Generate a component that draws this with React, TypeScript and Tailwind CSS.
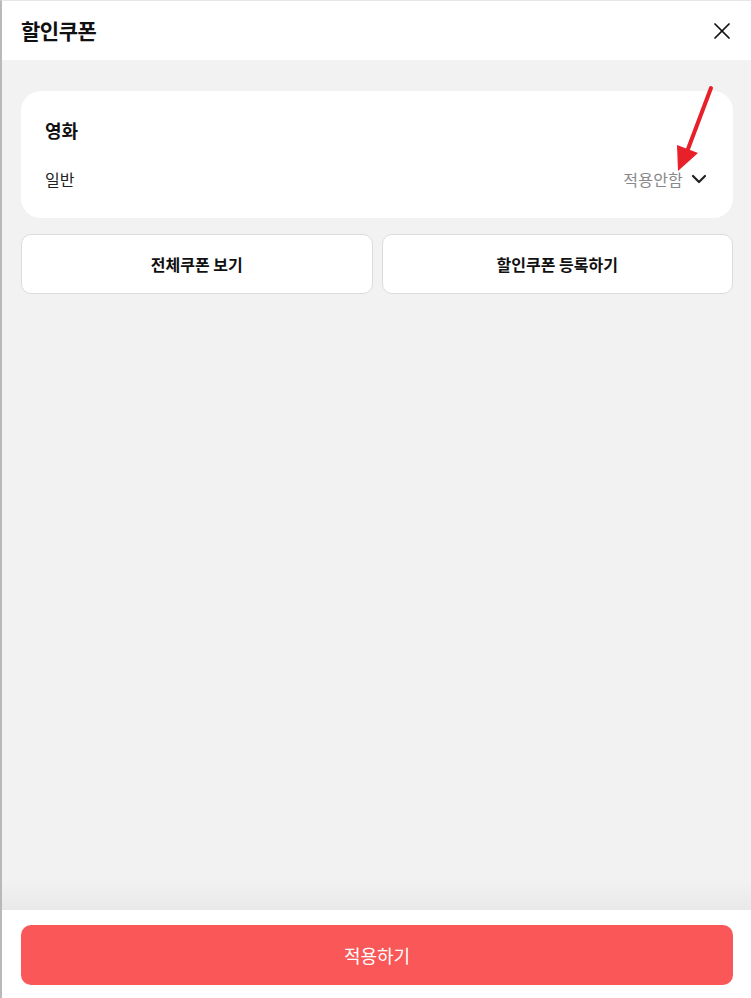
import {X, ChevronDown} from 'lucide-react'

export default function App() {
  return (
    <div
      className="relative flex h-[998px] w-[751px] flex-col overflow-hidden border-l-2 border-t border-l-[#b9b9b9] border-t-[#e6e6e6] bg-[#f2f2f2] text-[#111]"
      style={{fontFamily: '"Noto Sans CJK KR", "Noto Sans", sans-serif'}}
    >
      <header className="flex h-[59px] shrink-0 items-center justify-between bg-white pl-[19px] pr-[15px]">
        <h1 className="text-[21px] font-bold tracking-[-0.5px]">할인쿠폰</h1>
        <X size={28} strokeWidth={1.5} className="text-[#111]"/>
      </header>

      <main className="flex flex-1 flex-col gap-4 pl-[19px] pr-[18px] pt-[31px]">
        <section className="flex h-[127px] flex-col rounded-[20px] bg-white pl-6 pr-[22px] pt-[26px]">
          <h2 className="text-[18px] font-bold leading-[26px]">영화</h2>
          <div className="mt-[24px] flex items-center justify-between">
            <span className="text-[16px] leading-[24px] text-[#222]">일반</span>
            <div className="flex items-center gap-1">
              <span className="text-[16px] leading-[24px] tracking-[0.2px] text-[#888]">적용안함</span>
              <ChevronDown size={24} strokeWidth={2.2} className="text-[#222]"/>
            </div>
          </div>
        </section>

        <div className="grid grid-cols-2 gap-[9px]">
          <button className="h-[60px] rounded-[10px] border border-[#dcdcdc] bg-white text-[16px] font-bold">전체쿠폰 보기</button>
          <button className="h-[60px] rounded-[10px] border border-[#dcdcdc] bg-white text-[16px] font-bold">할인쿠폰 등록하기</button>
        </div>
      </main>

      <footer className="relative h-[88px] shrink-0 bg-white pl-[19px] pr-[18px] pt-[15px]">
        <div className="pointer-events-none absolute -top-[30px] left-0 right-0 h-[30px] bg-gradient-to-b from-transparent to-[#e9e9e9]"/>
        <button className="h-[60px] w-full rounded-[10px] bg-[#fa5858] text-[18px] text-white">적용하기</button>
      </footer>

      <svg className="pointer-events-none absolute left-[660px] top-[80px]" width="60" height="100" viewBox="0 0 60 100">
        <line x1="49" y1="7" x2="26" y2="68" stroke="#e8202a" strokeWidth="4" strokeLinecap="round"/>
        <polygon points="15,64 36,72 16,90" fill="#e8202a"/>
      </svg>
    </div>
  )
}
